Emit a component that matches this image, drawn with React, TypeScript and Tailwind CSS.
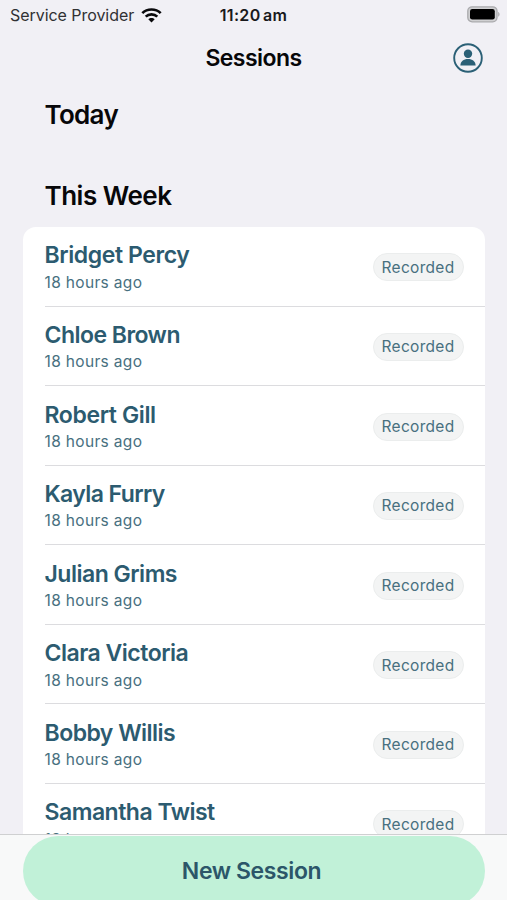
type Session = { name: string; ago: string; status: string; tracking: string };

const sessions: Session[] = [
  { name: "Bridget Percy", ago: "18 hours ago", status: "Recorded", tracking: "tracking-[-0.4px]" },
  { name: "Chloe Brown", ago: "18 hours ago", status: "Recorded", tracking: "tracking-[-0.53px]" },
  { name: "Robert Gill", ago: "18 hours ago", status: "Recorded", tracking: "tracking-[-0.38px]" },
  { name: "Kayla Furry", ago: "18 hours ago", status: "Recorded", tracking: "tracking-[-0.6px]" },
  { name: "Julian Grims", ago: "18 hours ago", status: "Recorded", tracking: "tracking-[-0.5px]" },
  { name: "Clara Victoria", ago: "18 hours ago", status: "Recorded", tracking: "tracking-[-0.5px]" },
  { name: "Bobby Willis", ago: "18 hours ago", status: "Recorded", tracking: "tracking-[-0.52px]" },
  { name: "Samantha Twist", ago: "18 hours ago", status: "Recorded", tracking: "tracking-[-0.5px]" },
];

function WifiIcon() {
  return (
    <svg width="21" height="15" viewBox="0 0 21 15" fill="none" stroke="#09090b" strokeWidth="2.7">
      <path d="M1.3 5.1C6.3 0.3 14.7 0.3 19.7 5.1" />
      <path d="M4.7 8.6C7.9 5.5 13.1 5.5 16.3 8.6" />
      <path d="M10.5 14.4L7.3 11.2C9 9.5 12 9.5 13.7 11.2Z" fill="#09090b" stroke="none" />
    </svg>
  );
}

function BatteryIcon() {
  return (
    <svg className="relative -top-px" width="34" height="17" viewBox="0 0 34 17">
      <rect x="1.8" y="0.8" width="29.2" height="15" rx="4.3" fill="#d0d0d2" stroke="#aaaaad" strokeWidth="1.3" />
      <rect x="4" y="3" width="24.8" height="10.6" rx="2.3" fill="#000" />
      <path d="M32.2 6C34 6.7 34 10 32.2 10.7Z" fill="#aaaaad" />
    </svg>
  );
}

function ProfileIcon() {
  return (
    <svg width="30" height="30" viewBox="0 0 30 30">
      <circle cx="15" cy="15" r="13.8" fill="none" stroke="#2b6076" strokeWidth="1.9" />
      <circle cx="15" cy="10.8" r="4.2" fill="#2b6076" />
      <path d="M7.4 22.5C7.4 18.6 10.5 16.1 15 16.1S22.6 18.6 22.6 22.5Z" fill="#2b6076" />
    </svg>
  );
}

function SessionRow({ session, divided }: { session: Session; divided: boolean }) {
  return (
    <li className="flex h-[79.57px] shrink-0 pl-[22px]">
      <div className={`flex flex-1 items-start justify-between pr-[21px] ${divided ? "border-b border-[#dcdcdf]" : ""}`}>
        <div className="pt-[14.4px]">
          <p className={`text-[23px] leading-[28px] font-[580] text-[#2c5b70] ${session.tracking}`}>{session.name}</p>
          <p className="mt-[3.4px] text-[15.5px] leading-[20px] tracking-[0.34px] text-[#48707f]">{session.ago}</p>
        </div>
        <span className="mt-[26.4px] flex h-[28px] w-[91px] items-center justify-center rounded-full border border-[#ebeded] bg-[#f3f4f4] text-[15.5px] tracking-[0.3px] text-[#48707f]">
          {session.status}
        </span>
      </div>
    </li>
  );
}

export default function App() {
  return (
    <div className="flex h-[900px] w-[507px] flex-col overflow-hidden bg-[#f1f0f5] font-['Inter','Liberation_Sans',sans-serif] whitespace-nowrap text-[#070709]">
      <header className="shrink-0">
        <div className="grid h-[30px] grid-cols-3 items-center pr-[7px] pl-[10px]">
          <div className="flex items-center gap-[7px] text-[16px] tracking-[-0.05px] text-[#303033]">
            <span>Service Provider</span>
            <WifiIcon />
          </div>
          <span className="pr-[3px] text-center text-[16px] font-[580] tracking-[0.35px] text-[#19191b] [word-spacing:-2px]">11:20 am</span>
          <div className="flex justify-end">
            <BatteryIcon />
          </div>
        </div>
        <div className="grid h-[56px] grid-cols-[1fr_auto_1fr] items-center pr-[24px] pl-[24px]">
          <span />
          <h1 className="text-[23px] font-[580] tracking-[-0.55px]">Sessions</h1>
          <div className="flex justify-end">
            <ProfileIcon />
          </div>
        </div>
      </header>

      <main className="flex min-h-0 flex-1 flex-col overflow-hidden px-[22.5px]">
        <h2 className="mt-[12px] pl-[22px] text-[26px] leading-[34px] font-[580] tracking-[-0.7px]">Today</h2>
        <h2 className="mt-[47px] pl-[22px] text-[26px] leading-[34px] font-[580] tracking-[-0.5px]">This Week</h2>
        <ul className="mt-[14px] flex flex-col rounded-t-[13px] bg-white">
          {sessions.map((session, i) => (
            <SessionRow key={session.name} session={session} divided={i < sessions.length - 1} />
          ))}
        </ul>
      </main>

      <footer className="h-[66px] shrink-0 overflow-hidden border-t border-[#cfd0d1] bg-[#f8f9f9] px-[22.5px] pt-px">
        <button className="flex h-[70px] w-full items-center justify-center rounded-full bg-[#c1f1d8] pr-[4px] text-[23px] font-semibold tracking-[-0.4px] text-[#2c5669]">
          New Session
        </button>
      </footer>
    </div>
  );
}
